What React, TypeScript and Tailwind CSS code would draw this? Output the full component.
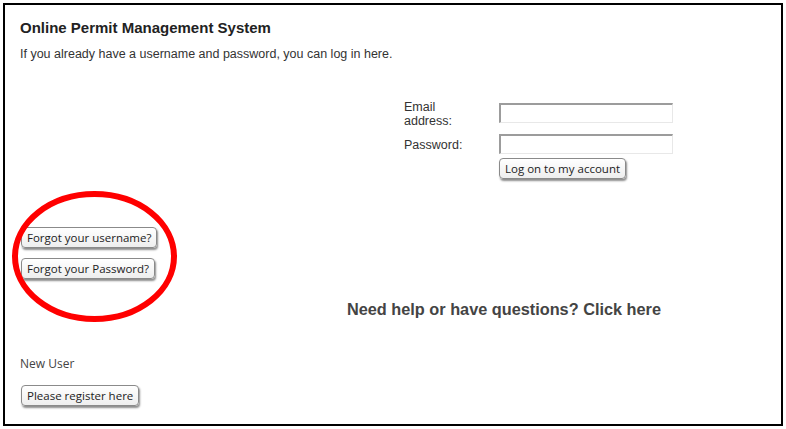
import React from "react";

const btn =
  "h-[21px] rounded-[4px] border border-[#8a8a8a] bg-gradient-to-b from-[#ffffff] to-[#eeeeee] px-[5px] text-[11.5px] leading-[19px] text-[#222] shadow-[1px_2px_2px_rgba(0,0,0,0.45)] [font-family:'Open_Sans',sans-serif]";

const field =
  "h-[20px] w-[174px] border-t-2 border-l-2 border-b border-r border-t-[#9c9c9c] border-l-[#9c9c9c] border-b-[#e8e8e8] border-r-[#e8e8e8] bg-white";

export default function App() {
  return (
    <div className="relative h-[429px] w-[786px] bg-white p-[3px] [font-family:'Liberation_Sans',Arial,sans-serif]">
      <div className="flex h-full flex-col border-2 border-black pl-[15px]">
        <h1 className="mt-[13px] text-[15px] font-bold leading-[20px] text-[#222]">
          Online Permit Management System
        </h1>
        <p className="mt-[8px] text-[12.5px] leading-[16px] text-[#333]">
          If you already have a username and password, you can log in here.
        </p>

        {/* login form */}
        <div className="ml-[384px] mt-[41px] flex flex-col text-[12.5px] leading-[14px] text-[#333]">
          <div className="flex h-[20px] items-center">
            <label className="w-[95px] pt-[2px]">
              Email
              <br />
              address:
            </label>
            <div className={field} />
          </div>
          <div className="mt-[11px] flex h-[20px] items-center">
            <label className="w-[95px] pt-[2px]">Password:</label>
            <div className={field} />
          </div>
          <div className="mt-[4px] pl-[95px]">
            <button className={btn}>Log on to my account</button>
          </div>
        </div>

        <div className="mt-[48px] flex flex-col items-start gap-[10px] pl-[1px]">
          <button className={btn}>Forgot your username?</button>
          <button className={btn}>Forgot your Password?</button>
        </div>

        <p className="ml-[327px] mt-[20px] text-[16.3px] font-bold leading-[20px] text-[#444]">
          Need help or have questions? Click here
        </p>

        <p className="mt-[37px] text-[12px] leading-[16px] text-[#444] [font-family:'Open_Sans',sans-serif]">
          New User
        </p>
        <div className="mt-[11px] pl-[1px]">
          <button className={btn}>Please register here</button>
        </div>
      </div>

      {/* red annotation ellipse */}
      <svg className="pointer-events-none absolute left-0 top-0" width="786" height="429">
        <ellipse cx="94.5" cy="256.5" rx="79.5" ry="62.5" fill="none" stroke="#ff0000" strokeWidth="6" />
      </svg>
    </div>
  );
}
